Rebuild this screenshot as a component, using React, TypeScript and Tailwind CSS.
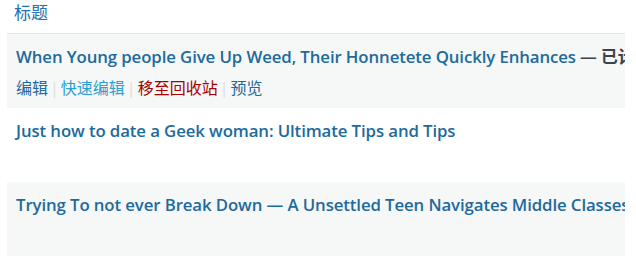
import React from 'react';

const rows = [
    { title: 'When Young people Give Up Weed, Their Honnetete Quickly Enhances', state: '已计划', actions: true, bg: 'bg-[#f6f7f7]' },
    { title: 'Just how to date a Geek woman: Ultimate Tips and Tips', state: '', actions: false, bg: 'bg-white' },
    { title: 'Trying To not ever Break Down — A Unsettled Teen Navigates Middle Classes Life', state: '', actions: false, bg: 'bg-[#f6f7f7]' },
];

export default function App() {
    return (
        <div className="w-[636px] h-[259px] bg-white overflow-hidden font-['Segoe_UI','Open_Sans','Noto_Sans','Noto_Sans_CJK_SC',sans-serif]">
            <div className="ml-[7px] w-[618px] overflow-hidden">
                {/* 表头 */}
                <div className="h-[34px] border-b border-[#e1e1e1] pl-[7px] pt-[1px]">
                    <span className="text-[17px] leading-[22px] text-[#2271b1]">标题</span>
                </div>

                {rows.map((row, i) => (
                    <div key={i} className={`h-[74px] ${row.bg} pl-[9px] pt-[12px]`}>
                        <div className="whitespace-nowrap text-[16.8px] leading-[22px] font-semibold tracking-[-0.1px]">
                            <a className="text-[#1d6a9c]">{row.title}</a>
                            {row.state && <span className="text-[#3c434a]"> — {row.state}</span>}
                        </div>
                        {row.actions && (
                            <div className="mt-[9px] whitespace-nowrap text-[16px] leading-[22px]">
                                <a className="text-[#1d6a9c]">编辑</a>
                                <span className="text-[#dcdcde] mx-[2px]">|</span>
                                <a className="text-[#2a9fd0]">快速编辑</a>
                                <span className="text-[#dcdcde] mx-[2px]">|</span>
                                <a className="text-[#a00]">移至回收站</a>
                                <span className="text-[#dcdcde] mx-[2px]">|</span>
                                <a className="text-[#1d6a9c]">预览</a>
                            </div>
                        )}
                    </div>
                ))}
            </div>
        </div>
    );
}
